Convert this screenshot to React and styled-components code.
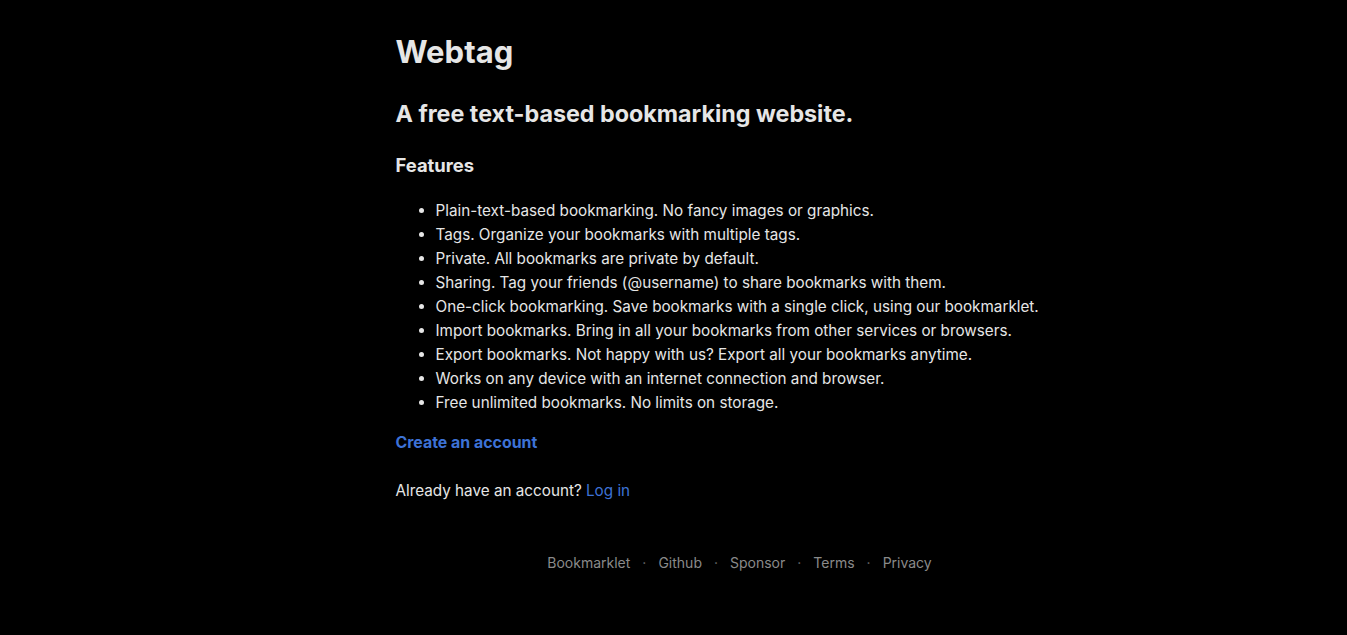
import React from "react";
import styled, { createGlobalStyle } from "styled-components";

const GlobalStyle = createGlobalStyle`
  html, body {
    margin: 0;
    background: #000000;
    color: #e6e6e6;
    font-family: Inter, "Noto Sans", sans-serif;
  }
`;

const Page = styled.div`
  width: 688px;
  margin-left: calc(50% - 278px);
  padding-top: 30px;
`;

const Title = styled.h1`
  font-size: 31px;
  font-weight: 700;
  margin: 0 0 22px;
  line-height: 44px;
`;

const Tagline = styled.h2`
  font-size: 23.3px;
  font-weight: 700;
  margin: 0 0 19px;
  line-height: 36px;
`;

const SectionTitle = styled.h3`
  font-size: 18.4px;
  font-weight: 700;
  margin: 0 0 20px;
  line-height: 28px;
`;

const FeatureList = styled.ul`
  margin: 0 0 16px;
  padding-left: 40px;
  font-size: 15.25px;
  line-height: 24px;
`;

const Feature = styled.li``;

const CreateLink = styled.a`
  display: block;
  color: #3d72d6;
  font-weight: 700;
  font-size: 15.9px;
  line-height: 24px;
  text-decoration: none;
  margin-bottom: 24px;
`;

const Text = styled.p`
  margin: 0;
  font-size: 15.25px;
  line-height: 24px;
`;

const Link = styled.a`
  color: #3d72d6;
  text-decoration: none;
`;

const Footer = styled.footer`
  display: flex;
  justify-content: center;
  align-items: center;
  gap: 12px;
  margin-top: 48px;
  font-size: 14px;
  line-height: 24px;
  color: #8a8a8a;
`;

const FooterLink = styled.a`
  color: #8a8a8a;
  text-decoration: none;
`;

const Dot = styled.span`
  color: #6a6a6a;
`;

const features = [
  "Plain-text-based bookmarking. No fancy images or graphics.",
  "Tags. Organize your bookmarks with multiple tags.",
  "Private. All bookmarks are private by default.",
  "Sharing. Tag your friends (@username) to share bookmarks with them.",
  "One-click bookmarking. Save bookmarks with a single click, using our bookmarklet.",
  "Import bookmarks. Bring in all your bookmarks from other services or browsers.",
  "Export bookmarks. Not happy with us? Export all your bookmarks anytime.",
  "Works on any device with an internet connection and browser.",
  "Free unlimited bookmarks. No limits on storage.",
];

const footerLinks = ["Bookmarklet", "Github", "Sponsor", "Terms", "Privacy"];

export default function App() {
  return (
    <>
      <GlobalStyle />
      <Page>
        <Title>Webtag</Title>
        <Tagline>A free text-based bookmarking website.</Tagline>
        <SectionTitle>Features</SectionTitle>
        <FeatureList>
          {features.map((f) => (
            <Feature key={f}>{f}</Feature>
          ))}
        </FeatureList>
        <CreateLink href="#">Create an account</CreateLink>
        <Text>
          Already have an account? <Link href="#">Log in</Link>
        </Text>
        <Footer>
          {footerLinks.map((l, i) => (
            <React.Fragment key={l}>
              {i > 0 && <Dot>·</Dot>}
              <FooterLink href="#">{l}</FooterLink>
            </React.Fragment>
          ))}
        </Footer>
      </Page>
    </>
  );
}
